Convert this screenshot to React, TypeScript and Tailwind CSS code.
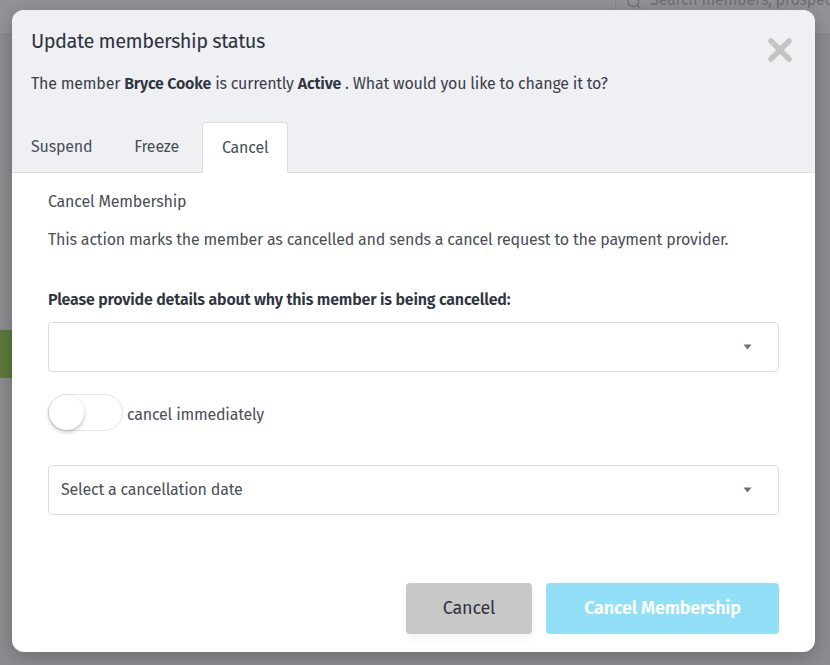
import React from 'react';
import { Search } from 'lucide-react';

const font = { fontFamily: '"Fira Sans", "Open Sans", "Liberation Sans", sans-serif', letterSpacing: '-0.2px' };

function Caret() {
  return (
    <svg width="9" height="6" viewBox="0 0 9 6" className="fill-[#6b7280]">
      <path d="M0.5 0.5 L8.5 0.5 L4.5 5.5 Z" />
    </svg>
  );
}

function CloseIcon() {
  return (
    <svg width="26" height="26" viewBox="0 0 26 26" fill="none" stroke="#c4c4c4" strokeWidth="5.5" strokeLinecap="round">
      <path d="M4 4 L22 22" />
      <path d="M22 4 L4 22" />
    </svg>
  );
}

function SelectBox({ placeholder }: { placeholder?: string }) {
  return (
    <div className="flex h-[50px] items-center justify-between rounded-[4px] border border-[#dcdde0] bg-white pl-[12px] pr-[26px]">
      <span className="text-[16px] text-[#4a4f57]">{placeholder}</span>
      <Caret />
    </div>
  );
}

export default function App() {
  return (
    <div className="relative h-[665px] w-[830px] overflow-hidden bg-[#8c8d90]" style={font}>
      {/* page behind the overlay */}
      <div className="flex h-[35px] items-start justify-end border-b border-[#828386] bg-[#939497]">
        <div className="flex h-full w-[215px] items-start gap-2 overflow-hidden whitespace-nowrap border-l border-[#86878a] pl-[10px] text-[16px] leading-[16px] text-[#6f7074]">
          <Search className="mt-[-6px] h-4 w-4 shrink-0" />
          <span className="-mt-[8px]">Search members, prospects</span>
        </div>
      </div>
      <div className="mt-[295px] h-[48px] w-[14px] bg-[#5e7a3a]" />

      {/* modal */}
      <div className="absolute left-[12px] top-[10px] flex h-[642px] w-[803px] flex-col overflow-hidden rounded-[12px] bg-white shadow-[0_4px_20px_rgba(0,0,0,0.25)]">
        <div className="relative border-b border-[#dcdde0] bg-[#eff0f4] px-[19px]">
          <h2 className="pt-[16px] text-[20px] leading-[30px] tracking-[-0.5px] text-[#2e3440]">Update membership status</h2>
          <p className="mt-[17px] text-[16px] leading-[22px] text-[#3b404a]">
            The member <b className="font-semibold text-[#2e3440]">Bryce Cooke</b> is currently{' '}
            <b className="font-semibold text-[#2e3440]">Active</b> . What would you like to change it to?
          </p>
          <div className="absolute right-[22px] top-[27px]">
            <CloseIcon />
          </div>
          <div className="mt-[27px] flex items-end text-[16px] text-[#4a4f57]">
            <div className="flex h-[50px] items-center pr-[24px]">Suspend</div>
            <div className="flex h-[50px] items-center pl-[18px] pr-[23px]">Freeze</div>
            <div className="-mb-px flex h-[51px] items-center rounded-t-[4px] border border-b-0 border-[#dcdde0] bg-white px-[19px]">
              Cancel
            </div>
          </div>
        </div>

        <div className="flex flex-1 flex-col px-[36px] pt-[18px] text-[#4a4f57]">
          <div className="text-[16px] leading-[22px]">Cancel Membership</div>
          <p className="mt-[16px] text-[16px] leading-[22px]">
            This action marks the member as cancelled and sends a cancel request to the payment provider.
          </p>
          <div className="mt-[38px] text-[16px] font-semibold leading-[22px] text-[#2e3440]">
            Please provide details about why this member is being cancelled:
          </div>
          <div className="mt-[11px]">
            <SelectBox />
          </div>
          <div className="mt-[22px] flex items-center gap-[4px]">
            <div className="relative h-[37px] w-[75px] rounded-full border border-[#e2e3e6] bg-white">
              <div className="absolute left-0 top-0 h-[35px] w-[35px] rounded-full bg-white shadow-[0_2px_4px_rgba(0,0,0,0.25)]" />
            </div>
            <span className="mt-[4px] text-[16px] text-[#4a4f57]">cancel immediately</span>
          </div>
          <div className="mt-[34px]">
            <SelectBox placeholder="Select a cancellation date" />
          </div>
          <div className="mt-[68px] flex justify-end gap-[14px]">
            <button className="h-[51px] w-[126px] rounded-[4px] bg-[#c8c8c9] text-[18px] text-[#2e3440] shadow-[0_4px_8px_rgba(0,0,0,0.06)]">
              Cancel
            </button>
            <button className="h-[51px] w-[233px] rounded-[4px] bg-[#92e0f7] text-[18px] font-semibold text-white">
              Cancel Membership
            </button>
          </div>
        </div>
      </div>
    </div>
  );
}
